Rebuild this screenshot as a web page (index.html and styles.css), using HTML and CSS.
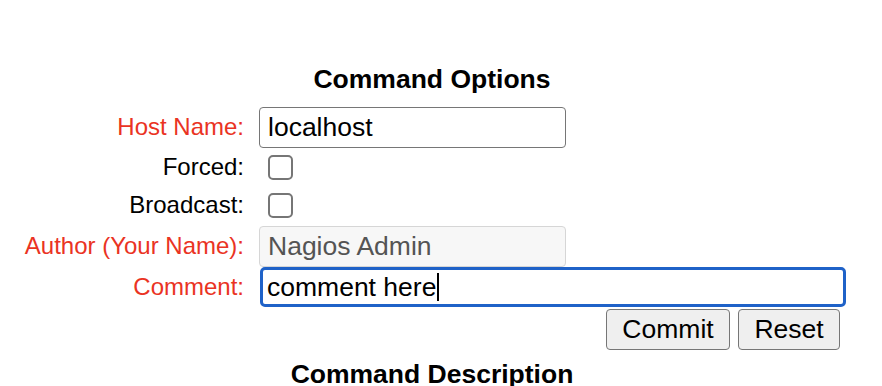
FILE: index.html
```html
<!DOCTYPE html>
<html>
  <head>
    <title>Command Options</title>
    <link rel="stylesheet" href="styles.css">
  </head>
  <body>
  <div id="page">
    <div class="boxTitle">Command Options</div>
    <form class="optBox">
      <div class="row hostRow">
        <span class="label required">Host Name:</span>
        <span class="field"><input type="text" class="textIn shortIn" value="localhost"></span>
      </div>
      <div class="row checkRow">
        <span class="label">Forced:</span>
        <span class="field"><input type="checkbox" class="check"></span>
      </div>
      <div class="row checkRow">
        <span class="label">Broadcast:</span>
        <span class="field"><input type="checkbox" class="check"></span>
      </div>
      <div class="row authorRow">
        <span class="label required">Author (Your Name):</span>
        <span class="field"><input type="text" class="textIn shortIn" value="Nagios Admin" disabled></span>
      </div>
      <div class="row commentRow">
        <span class="label required">Comment:</span>
        <span class="field"><span class="commentBox">comment here<span class="caret"></span></span></span>
      </div>
      <div class="row buttonRow">
        <input type="submit" class="btn commitBtn" value="Commit">
        <input type="reset" class="btn resetBtn" value="Reset">
      </div>
    </form>
    <div class="boxTitle descTitle">Command Description</div>
  </div>
  </body>
</html>
```

FILE: styles.css
```css
body {
  margin: 0;
  background: white;
  color: black;
  font: 24px "Liberation Sans", Arial, sans-serif;
  overflow: hidden;
  }
#page {
  width: 882px;
  padding-top: 64px;
  }
.boxTitle {
  font: bold 26.5px "Liberation Sans", Arial, sans-serif;
  text-align: center;
  width: 864px;
  height: 42px;
  }
.row {
  display: flex;
  align-items: center;
  }
.label {
  width: 244px;
  text-align: right;
  padding-right: 15px;
  white-space: nowrap;
  }
.required {
  color: rgb(234,51,35);
  }
.field {
  display: flex;
  align-items: center;
  }
.hostRow {
  height: 42px;
  }
.checkRow {
  height: 38px;
  }
.authorRow {
  height: 42px;
  margin-top: 1px;
  }
.commentRow {
  height: 40px;
  }
.buttonRow {
  height: 42px;
  justify-content: flex-end;
  width: 840px;
  gap: 8px;
  margin-top: 1px;
  }
.textIn {
  box-sizing: border-box;
  height: 41px;
  margin: 0;
  padding: 0 8px;
  font: 26.5px "Liberation Sans", Arial, sans-serif;
  color: black;
  background: white;
  border: 1.5px solid rgb(118,118,118);
  border-radius: 4px;
  outline: none;
  }
.shortIn {
  width: 307px;
  }
.textIn:disabled {
  background: rgb(247,247,247);
  border-color: rgb(214,214,214);
  color: rgb(84,84,84);
  }
.check {
  appearance: none;
  -webkit-appearance: none;
  box-sizing: border-box;
  width: 25px;
  height: 25px;
  margin: 0 0 0 9px;
  border: 2px solid rgb(118,118,118);
  border-radius: 5px;
  background: white;
  }
.commentBox {
  box-sizing: border-box;
  display: flex;
  align-items: center;
  width: 586px;
  height: 40px;
  margin-left: 1px;
  padding: 0 4px;
  font-size: 26.5px;
  border: 3px solid rgb(31,98,200);
  border-radius: 5px;
  }
.caret {
  display: inline-block;
  width: 2px;
  height: 28px;
  background: black;
  margin-left: 1px;
  }
.btn {
  box-sizing: border-box;
  height: 41px;
  margin: 0;
  padding: 0;
  font: 26.5px "Liberation Sans", Arial, sans-serif;
  color: black;
  background: rgb(239,239,239);
  border: 1.5px solid rgb(118,118,118);
  border-radius: 4px;
  }
.commitBtn {
  width: 124px;
  }
.resetBtn {
  width: 102px;
  }
.descTitle {
  margin-top: 9px;
  }
```
